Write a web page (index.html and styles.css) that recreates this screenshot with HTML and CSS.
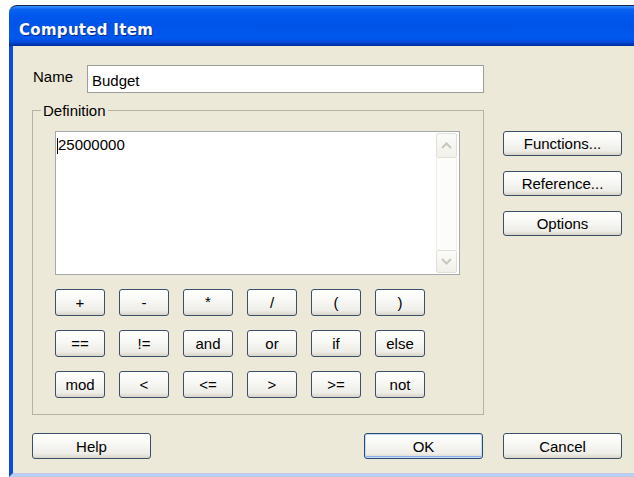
FILE: index.html
```html
<!DOCTYPE html>
<html lang="en">
<head>
<meta charset="utf-8">
<title>Computed Item</title>
<link rel="stylesheet" href="styles.css">
</head>
<body>
<div class="window">
  <div class="titlebar"><span class="title">Computed Item</span></div>
  <div class="client">
    <div class="upper">
      <div class="main">
        <div class="name-row">
          <label class="name-label" for="name-field">Name</label>
          <div class="field" id="name-field">Budget</div>
        </div>
        <fieldset class="group">
          <legend class="group-title">Definition</legend>
          <div class="group-body">
            <div class="editor">
              <div class="editor-text"><span class="caret"></span>25000000</div>
              <div class="vscroll">
                <div class="sb-btn sb-up">
                  <svg width="11" height="7" viewBox="0 0 11 7"><polyline points="1,6 5.5,1.5 10,6" fill="none" stroke="#c9c6ba" stroke-width="2"/></svg>
                </div>
                <div class="sb-track"></div>
                <div class="sb-btn sb-down">
                  <svg width="11" height="7" viewBox="0 0 11 7"><polyline points="1,1 5.5,5.5 10,1" fill="none" stroke="#c9c6ba" stroke-width="2"/></svg>
                </div>
              </div>
            </div>
            <div class="ops">
              <button class="btn op">+</button>
              <button class="btn op">-</button>
              <button class="btn op op-star">*</button>
              <button class="btn op">/</button>
              <button class="btn op">(</button>
              <button class="btn op">)</button>
              <button class="btn op">==</button>
              <button class="btn op">!=</button>
              <button class="btn op">and</button>
              <button class="btn op">or</button>
              <button class="btn op">if</button>
              <button class="btn op">else</button>
              <button class="btn op">mod</button>
              <button class="btn op">&lt;</button>
              <button class="btn op">&lt;=</button>
              <button class="btn op">&gt;</button>
              <button class="btn op">&gt;=</button>
              <button class="btn op">not</button>
            </div>
          </div>
        </fieldset>
      </div>
      <div class="side">
        <button class="btn side-btn">Functions...</button>
        <button class="btn side-btn">Reference...</button>
        <button class="btn side-btn">Options</button>
      </div>
    </div>
    <div class="footer">
      <button class="btn foot-btn">Help</button>
      <button class="btn foot-btn default-btn">OK</button>
      <button class="btn foot-btn">Cancel</button>
    </div>
  </div>
</div>
</body>
</html>
```
FILE: styles.css
```css
html, body {
  margin: 0;
  padding: 0;
  width: 634px;
  height: 477px;
  overflow: hidden;
  background: #ffffff;
}

.window {
  margin: 5px 0 0 9px;
  width: 640px;
  font-family: "Liberation Sans", Arial, sans-serif;
  font-size: 15px;
  color: #000;
}

/* Luna-style caption bar */
.titlebar {
  box-sizing: border-box;
  height: 41px;
  border-top: 1px solid #14224e;
  border-radius: 8px 8px 0 0;
  padding: 15px 0 0 10px;
  background: linear-gradient(180deg,
    #3d95ff 0%,
    #0b64f0 8%,
    #0058ee 22%,
    #0054e8 50%,
    #0059ee 78%,
    #0050e2 88%,
    #0039bd 95%,
    #002c96 100%);
}

.title {
  display: block;
  font-family: "DejaVu Sans", Verdana, sans-serif;
  font-weight: bold;
  font-size: 15px;
  line-height: 18px;
  letter-spacing: 0.3px;
  color: #ffffff;
  text-shadow: 1px 1px 0 #0b2a8a;
}

/* dialog client area */
.client {
  box-sizing: border-box;
  height: 431px;
  background: #ece9d8;
  border-left: 4px solid #0b4cdc;
  border-bottom: 4px solid #bccbf0;
  padding: 19px 0 0 19px;
}

.upper {
  display: flex;
  gap: 19px;
}

.main {
  width: 452px;
}

.name-row {
  display: flex;
  height: 28px;
}

.name-label {
  width: 54px;
  margin-left: 1px;
  margin-top: 3px;
  line-height: 17px;
}

.field {
  box-sizing: border-box;
  width: 397px;
  height: 28px;
  background: #ffffff;
  border: 1px solid #9d9d9a;
  padding: 6px 0 0 4px;
  line-height: 17px;
}

/* group box */
.group {
  box-sizing: border-box;
  width: 452px;
  margin: 10px 0 0 0;
  padding: 0 0 16px 8px;
  border: 1px solid #b5b2a3;
  min-width: 0;
}

.group-title {
  padding: 0 2px;
  line-height: 15px;
}

.group-body {
  margin-left: 14px;
}

.editor {
  box-sizing: border-box;
  margin-top: 13px;
  width: 405px;
  height: 144px;
  background: #ffffff;
  border: 1px solid #a4a9ae;
  display: flex;
}

.editor-text {
  flex: 1;
  padding: 4px 0 0 1px;
  line-height: 17px;
}

.caret {
  display: inline-block;
  width: 1px;
  height: 16px;
  background: #000;
  vertical-align: -4px;
  margin-right: 0;
}

.vscroll {
  width: 21px;
  margin: 1px 2px 1px 0;
  display: flex;
  flex-direction: column;
}

.sb-btn {
  box-sizing: border-box;
  border: 1px solid #e2dfd4;
  border-radius: 2px;
  background: linear-gradient(180deg, #fbfbf9, #f1f0ea);
  display: flex;
  align-items: center;
  justify-content: center;
}

.sb-up {
  height: 25px;
}

.sb-down {
  height: 23px;
}

.sb-track {
  flex: 1;
  background: #fcfcfa;
  border-left: 1px solid #efede6;
  border-right: 1px solid #efede6;
}

/* operator keypad */
.ops {
  margin-top: 14px;
  display: grid;
  grid-template-columns: repeat(6, 50px);
  grid-auto-rows: 27px;
  column-gap: 14px;
  row-gap: 14px;
}

/* push buttons */
.btn {
  box-sizing: border-box;
  margin: 0;
  padding: 0;
  font-family: "Liberation Sans", Arial, sans-serif;
  font-size: 15px;
  line-height: 17px;
  color: #000;
  border: 1px solid #3b5068;
  border-radius: 3px;
  background: linear-gradient(180deg,
    #ffffff 0%,
    #f8f8f5 40%,
    #eeede7 82%,
    #d9d4c8 100%);
  display: flex;
  align-items: center;
  justify-content: center;
}

.op-star {
  align-items: flex-start;
  padding-top: 3px;
}

.side {
  margin-top: 66px;
  display: flex;
  flex-direction: column;
  gap: 15px;
}

.side-btn {
  width: 119px;
  height: 25px;
}

.footer {
  width: 590px;
  margin-top: 18px;
  display: flex;
  gap: 20px;
}

.foot-btn {
  width: 119px;
  height: 26px;
}

.default-btn {
  margin-left: auto;
  border-color: #2a4a7a;
  box-shadow: inset 0 0 0 1px #c4d8f7, inset 0 -2px 0 #8fb0e6, inset 1px 0 0 #a9c4f0;
}
```
